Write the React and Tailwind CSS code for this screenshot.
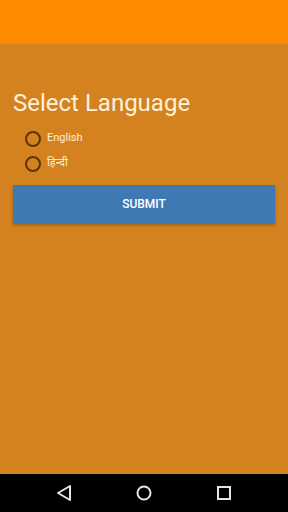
const languages = [
  { id: 'en', label: 'English' },
  { id: 'hi', label: 'हिन्दी' }
];

const Radio = ({ label }) => (
  <label className="flex items-center h-[25px] pl-[12px]">
    <span className="w-[16px] h-[16px] rounded-full border-[2px] border-[#5b3406]" />
    <span className="ml-[6px] text-[11px] text-[#fdf0dc]">{label}</span>
  </label>
);

const App = () => {
  return (
    <div
      className="w-[288px] h-[512px] flex flex-col bg-[#d4821f]"
      style={{ fontFamily: 'Roboto, "Noto Sans", sans-serif' }}
    >
      {/* status/app bar */}
      <div className="h-[44px] bg-[#ff8a00]" />

      <div className="flex-1 flex flex-col px-[13px]">
        <h1 className="mt-[43px] text-[24px] leading-[32px] text-[#fdf0dc]">Select Language</h1>
        <div className="mt-[7px] flex flex-col">
          {languages.map((lang) => (
            <Radio key={lang.id} label={lang.label} />
          ))}
        </div>
        <button className="mt-[9px] h-[38px] w-full bg-[#3f79b4] text-white text-[12px] font-medium shadow-[0_2px_3px_rgba(0,0,0,0.3)]">
          SUBMIT
        </button>
      </div>

      {/* nav bar */}
      <div className="h-[38px] bg-black flex items-center justify-center gap-[62px]">
        <svg width="18" height="18" viewBox="0 0 18 18">
          <path d="M15 2 L3 9 L15 16 Z" fill="none" stroke="#e5e5e5" strokeWidth="2" strokeLinejoin="round" />
        </svg>
        <svg width="18" height="18" viewBox="0 0 18 18">
          <circle cx="9" cy="9" r="6.5" fill="none" stroke="#e5e5e5" strokeWidth="2" />
        </svg>
        <svg width="18" height="18" viewBox="0 0 18 18">
          <rect x="3" y="3" width="12" height="12" fill="none" stroke="#e5e5e5" strokeWidth="2" />
        </svg>
      </div>
    </div>
  );
};

export default App;
